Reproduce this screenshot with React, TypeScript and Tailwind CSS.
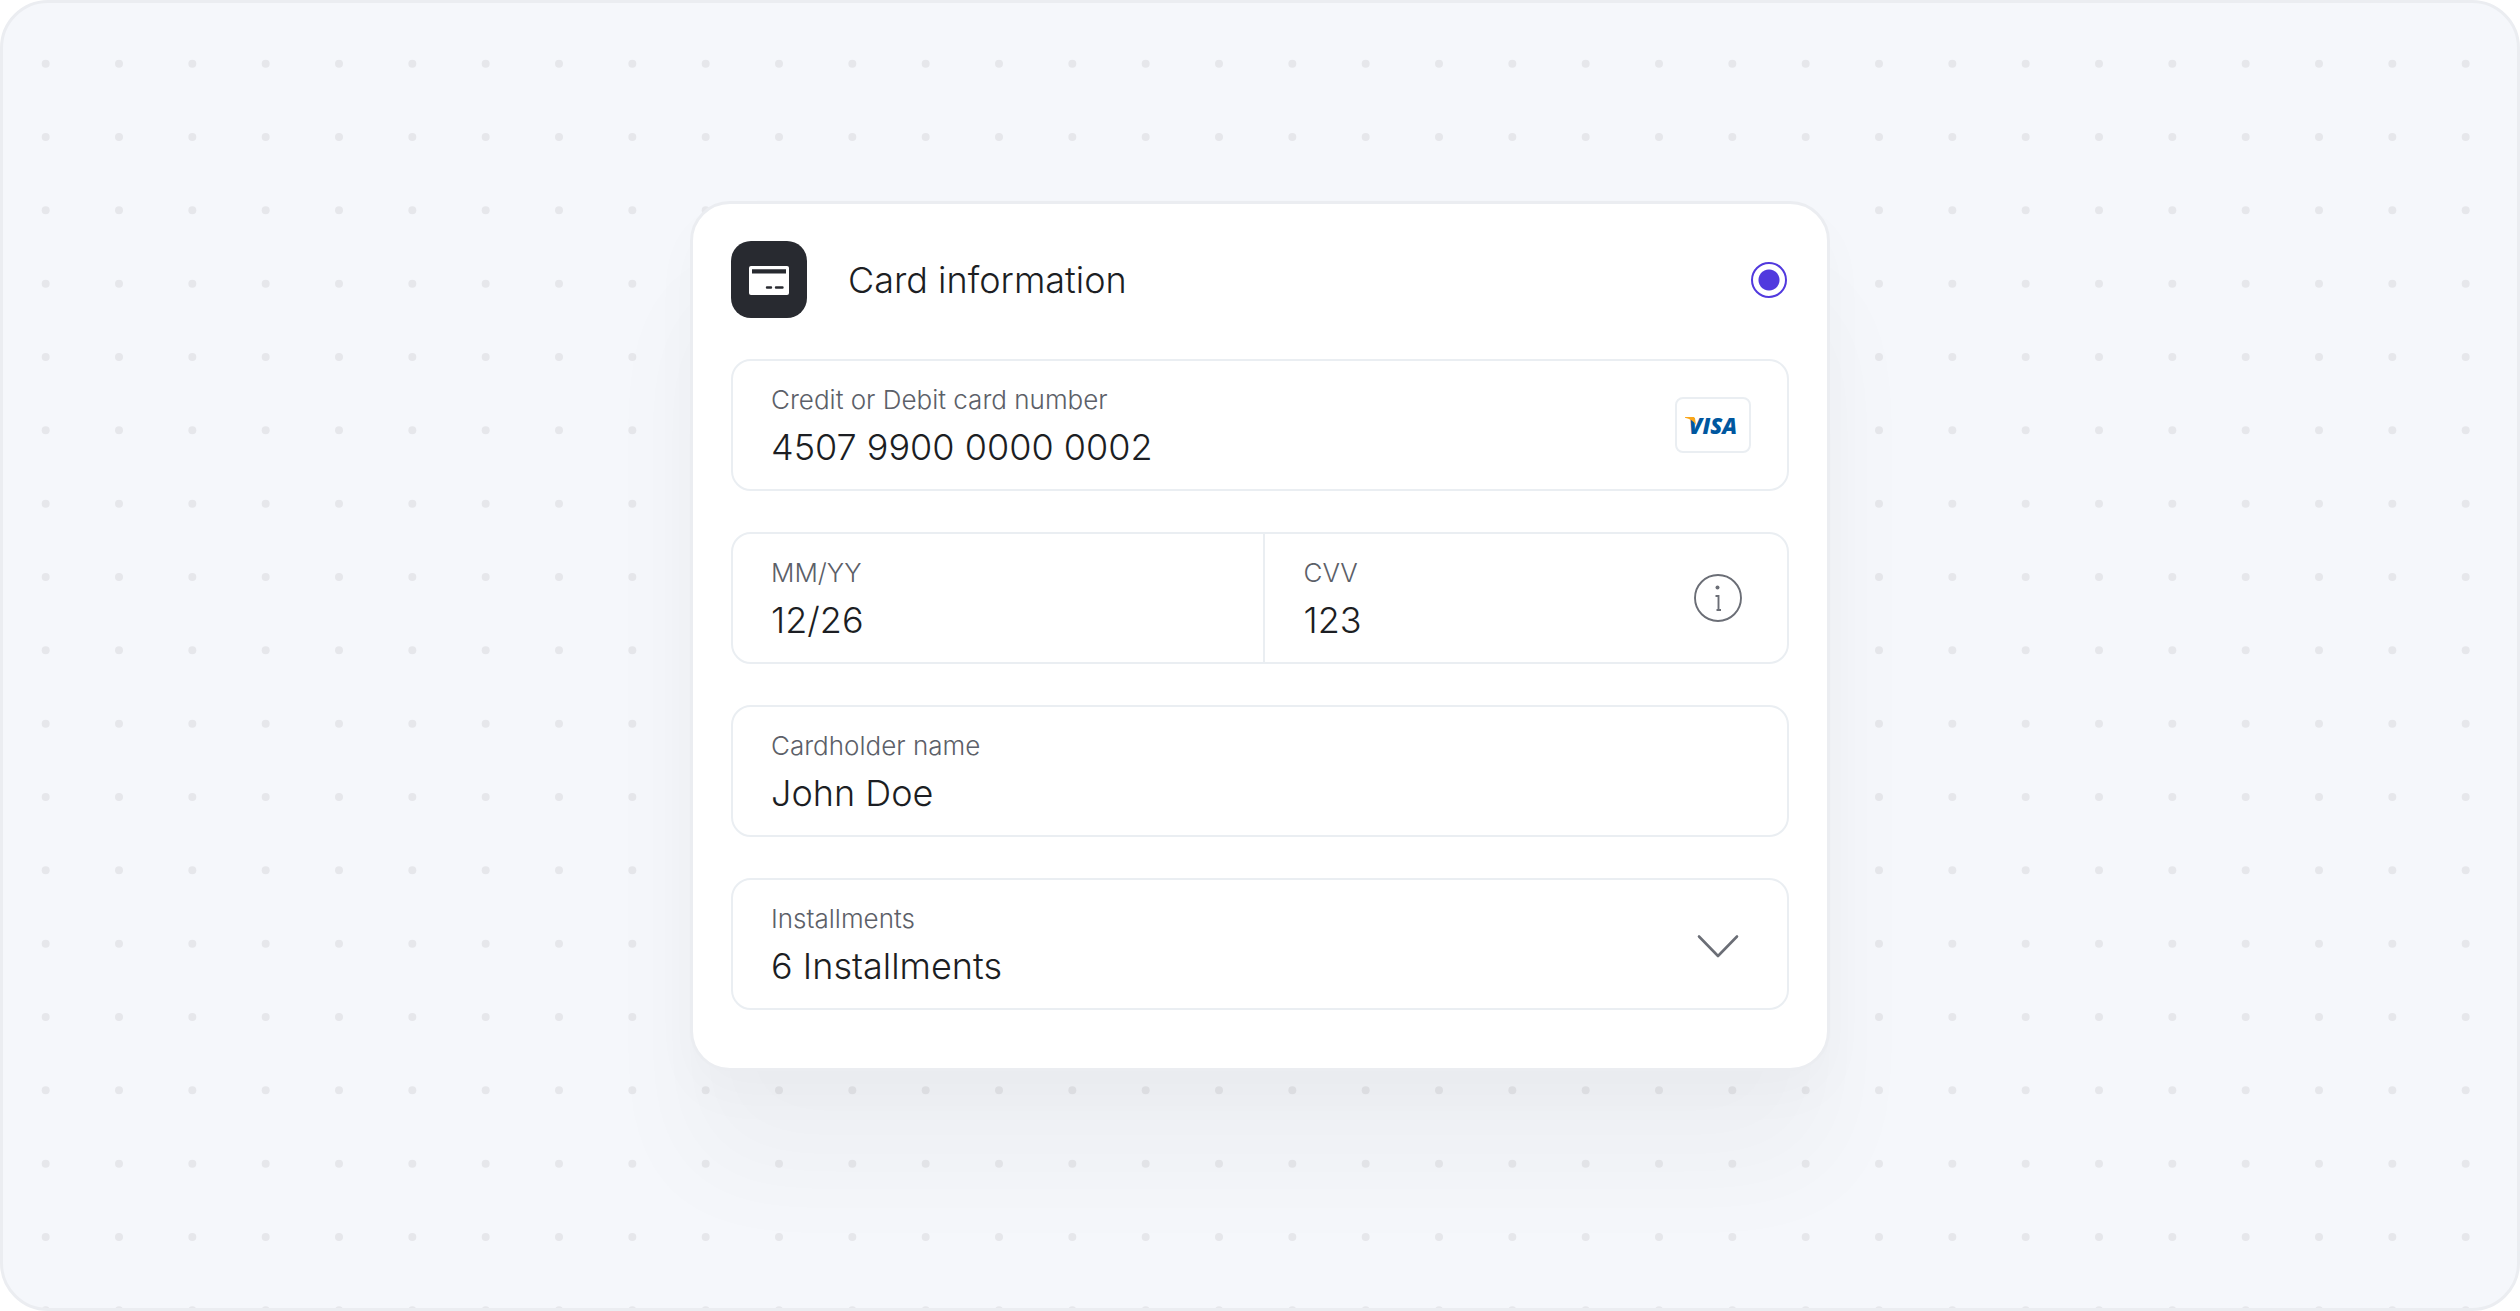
import type { ReactNode } from "react";

interface FieldProps {
  id: string;
  label: string;
  children: ReactNode;
  trailing?: ReactNode;
  className?: string;
}

const controlClass =
  "mt-[6px] block h-[44px] w-full appearance-none bg-transparent p-0 text-[36px] leading-[44px] font-light text-[#1c1e23] outline-none";

function Field({ id, label, children, trailing, className = "flex-1" }: FieldProps) {
  return (
    <div className={`flex h-32 min-w-0 items-center gap-6 pr-9 pl-[38px] ${className}`}>
      <div className="min-w-0 flex-1">
        <label htmlFor={id} className="block text-[26px] leading-[38px] font-light text-[#5c6068]">
          {label}
        </label>
        {children}
      </div>
      {trailing}
    </div>
  );
}

function FieldBox({ children }: { children: ReactNode }) {
  return (
    <div className="flex overflow-hidden rounded-[20px] border-2 border-[#eaeef2]">{children}</div>
  );
}

function DotGrid() {
  return (
    <svg className="absolute inset-0 h-full w-full" aria-hidden="true">
      <defs>
        <pattern id="dots" x="6" y="24" width="220" height="220" patternUnits="userSpaceOnUse">
          <g fill="#e6e7eb">
            {[36.67, 110, 183.33].map((y) =>
              [36.67, 110, 183.33].map((x) => <circle key={`${x}-${y}`} cx={x} cy={y} r="4" />),
            )}
          </g>
        </pattern>
      </defs>
      <rect width="100%" height="100%" fill="url(#dots)" />
    </svg>
  );
}

function CardIcon() {
  return (
    <span className="flex h-[77px] w-[76px] items-center justify-center rounded-[20px] bg-[#282a30]">
      <svg width="40" height="30" viewBox="0 -1 40 30" aria-hidden="true">
        <rect width="40" height="29" rx="2" fill="#fff" />
        <path d="M3 3.2h34v4.4H3z" fill="#282a30" />
        <path d="M18 21.5h4M27 21.5h6.5" stroke="#282a30" strokeWidth="2.4" strokeLinecap="round" />
      </svg>
    </span>
  );
}

function VisaBadge() {
  return (
    <span className="flex h-14 w-[76px] items-center justify-center rounded-lg border-2 border-[#eaeef2]">
      <span className="relative font-['Open_Sans',sans-serif] text-[22px] leading-6 font-extrabold text-[#00579f] italic">
        VISA
        <svg className="absolute top-1 -left-1" width="12" height="9" viewBox="0 0 12 9" aria-hidden="true">
          <path d="M0 0h8c1.2 0 1.8.5 2 1.6L11 8C8.5 4 5 1.8 0 .8z" fill="#faa61a" />
        </svg>
      </span>
    </span>
  );
}

function InfoIcon() {
  return (
    <svg width="48" height="48" viewBox="0 0 48 48" fill="none" stroke="#6b6e76" aria-hidden="true">
      <circle cx="24" cy="24" r="23" strokeWidth="1.9" />
      <circle cx="23.5" cy="13.5" r="2" fill="#6b6e76" stroke="none" />
      <path d="M21.5 22h3v14M22.5 36h4.5" strokeWidth="1.9" />
    </svg>
  );
}

export default function App() {
  return (
    <main className="relative flex min-h-screen flex-col items-center overflow-hidden rounded-[48px] border-[3px] border-[#ebedf1] bg-[#f5f7fb] px-6 pt-[198px] pb-24 font-[Inter,sans-serif]">
      <DotGrid />
      <form className="relative w-full max-w-[1140px] rounded-[40px] border-[3px] border-[#ebedf1] bg-white px-[38px] pt-[37px] pb-[58px] shadow-[0_24px_52px_rgba(0,0,0,0.025),0_100px_110px_rgba(0,0,0,0.03)]">
        <div className="flex items-center pr-[2px]">
          <CardIcon />
          <label htmlFor="method" className="ml-[41px] flex-1 text-[36px] leading-[44px] font-light text-[#1c1e23]">
            Card information
          </label>
          <input
            id="method"
            type="radio"
            name="method"
            defaultChecked
            className="size-9 appearance-none rounded-full border-2 border-[#5139de] bg-[radial-gradient(circle,#5139de_10px,transparent_11px)]"
          />
        </div>

        <div className="mt-[41px] flex flex-col gap-[41px]">
          <FieldBox>
            <Field id="number" label="Credit or Debit card number" trailing={<VisaBadge />}>
              <input id="number" className={controlClass} defaultValue="4507 9900 0000 0002" />
            </Field>
          </FieldBox>

          <FieldBox>
            <Field id="expiry" label="MM/YY" className="flex-[51]">
              <input id="expiry" className={controlClass} defaultValue="12/26" />
            </Field>
            <div className="w-[2px] bg-[#eaeef2]" />
            <Field
              id="cvv"
              label="CVV"
              className="flex-[50]"
              trailing={
                <button type="button" aria-label="About the security code" className="mr-[9px]">
                  <InfoIcon />
                </button>
              }
            >
              <input id="cvv" className={controlClass} defaultValue="123" />
            </Field>
          </FieldBox>

          <FieldBox>
            <Field id="holder" label="Cardholder name">
              <input id="holder" className={controlClass} defaultValue="John Doe" />
            </Field>
          </FieldBox>

          <FieldBox>
            <Field
              id="installments"
              label="Installments"
              trailing={
                <svg className="mr-3" width="42" height="32" viewBox="0 0 42 32" fill="none" aria-hidden="true">
                  <path d="m2 8.5 19 19.5 19-19.5" stroke="#6b6e76" strokeWidth="2.6" strokeLinecap="round" strokeLinejoin="round" />
                </svg>
              }
            >
              <select id="installments" className={controlClass} defaultValue="6">
                <option value="6">6 Installments</option>
              </select>
            </Field>
          </FieldBox>
        </div>
      </form>
    </main>
  );
}
